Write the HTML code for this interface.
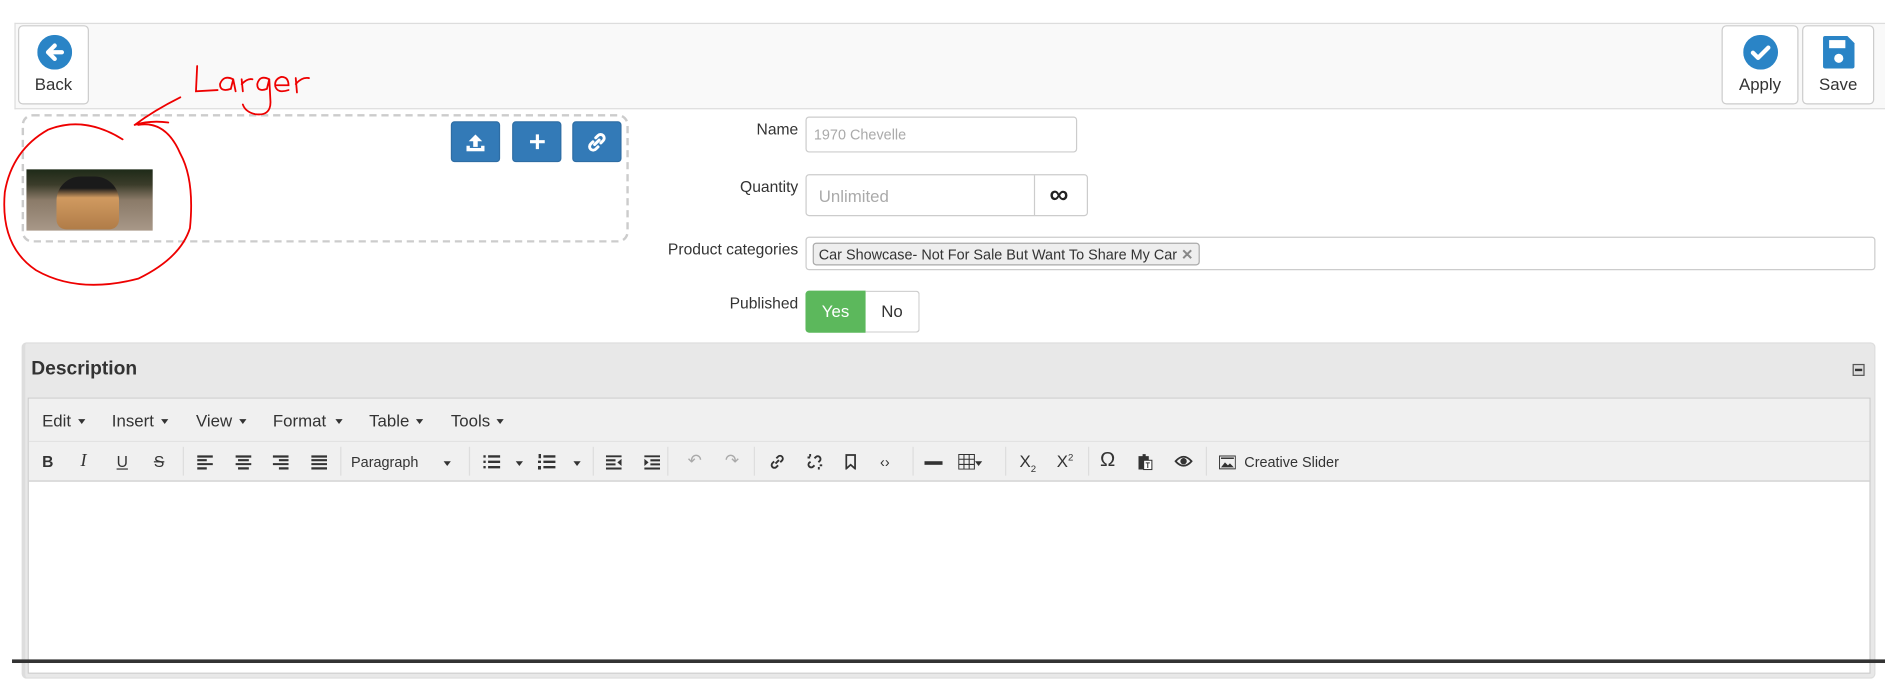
<!DOCTYPE html>
<html><head><meta charset="utf-8"><style>
*{box-sizing:border-box;margin:0;padding:0}
html,body{width:1885px;height:663px;overflow:hidden;background:#fff}
#w{position:absolute;left:0;top:0;width:1568px;height:552px;transform:scale(1.2022,1.2011);transform-origin:0 0;font-family:"Liberation Sans",sans-serif;color:#333}
.a{position:absolute}
.btn{position:absolute;top:21px;height:66px;background:#fff;border:1px solid #ccc;border-radius:4px;text-align:center;font-size:14px}
.btn span{position:absolute;left:0;right:0;top:40px}
.lbl{position:absolute;font-size:13px;text-align:right;right:904px}
.inp{position:absolute;border:1px solid #ccc;border-radius:3px;background:#fff}
.bb{position:absolute;top:101px;width:41px;height:34px;background:#337ab7;border-radius:3px;border:1px solid #2e6da4}
.mi{position:absolute;top:342px;font-size:14px;color:#333}
.ti{position:absolute;top:377px;font-size:13px;color:#333}
.sep{position:absolute;top:372px;width:1px;height:24px;background:#ddd}
.car{position:absolute;border-left:3.5px solid transparent;border-right:3.5px solid transparent;border-top:4px solid #333}
</style></head><body><div id="w">
<div class="a" style="left:12px;top:19px;width:1556px;height:72px;background:#f9f9f9;border:1px solid #ddd;border-right:0"></div>
<div class="btn" style="left:15px;width:59px">
<svg class="a" style="left:15px;top:7px" width="29" height="29" viewBox="0 0 34 34"><circle cx="17" cy="17" r="17" fill="#2a84c6"/><path d="M24 17H11M17 10.5l-6.5 6.5 6.5 6.5" stroke="#fff" stroke-width="4.2" fill="none" stroke-linecap="round" stroke-linejoin="round"/></svg>
<span>Back</span></div>
<div class="btn" style="left:1432px;width:64px">
<svg class="a" style="left:17px;top:7px" width="29" height="29" viewBox="0 0 34 34"><circle cx="17" cy="17" r="17" fill="#2a84c6"/><path d="M9.5 17.5l5 5 10-10" stroke="#fff" stroke-width="4.2" fill="none" stroke-linecap="round" stroke-linejoin="round"/></svg>
<span>Apply</span></div>
<div class="btn" style="left:1499px;width:60px">
<svg class="a" style="left:16px;top:8px" width="27" height="27" viewBox="0 0 31 32"><path d="M0 2Q0 0 2 0H24L31 7V30Q31 32 29 32H2Q0 32 0 30Z" fill="#2a84c6"/><rect x="6" y="4" width="16" height="8" fill="#fff"/><circle cx="15.5" cy="22" r="4.5" fill="#fff"/></svg>
<span>Save</span></div>

<div class="a" style="left:18px;top:95px;width:505px;height:107px;border:2px dashed #ccc;border-radius:9px"></div>
<div class="bb" style="left:375px"><svg class="a" style="left:12px;top:9px" width="15" height="15" viewBox="0 0 16 16"><path d="M8 1L2 7h4v5h4V7h4z M0 11h3v2h10v-2h3v5H0z" fill="#fff"/></svg></div>
<div class="bb" style="left:426px"><svg class="a" style="left:13px;top:9px" width="14" height="14" viewBox="0 0 16 16"><path d="M6.5 1h3v5.5H15v3H9.5V15h-3V9.5H1v-3h5.5z" fill="#fff"/></svg></div>
<div class="bb" style="left:476px"><svg class="a" style="left:11px;top:8px" width="17" height="17" viewBox="0 0 18 18"><path d="M8 5l2-2a3 3 0 0 1 4.5 4.5l-2 2M10 13l-2 2a3 3 0 0 1-4.5-4.5l2-2M7 11l4-4" stroke="#fff" stroke-width="2.6" fill="none" stroke-linecap="round"/></svg></div>
<div class="a" style="left:22px;top:141px;width:105px;height:51px;background:linear-gradient(#1e2a18 0%,#3b3c2a 25%,#8a7a68 50%,#a89888 100%);overflow:hidden"><div class="a" style="left:25px;top:6px;width:52px;height:44px;border-radius:20px 20px 8px 8px;background:linear-gradient(#1a1a1a 0,#1a1a1a 22%,#d09a60 40%,#b07c48 100%)"></div></div>

<div class="lbl" style="top:100px">Name</div>
<div class="inp" style="left:670px;top:97px;width:226px;height:30px"><span class="a" style="left:6px;top:7px;font-size:12px;color:#aaa">1970 Chevelle</span></div>
<div class="lbl" style="top:148px">Quantity</div>
<div class="inp" style="left:670px;top:145px;width:235px;height:35px"><span class="a" style="left:10px;top:9px;font-size:14px;color:#aaa">Unlimited</span><div class="a" style="left:189px;top:0;width:1px;height:33px;background:#ccc"></div><span class="a" style="left:202px;top:3px;font-size:22px;font-weight:bold;color:#222">∞</span></div>
<div class="lbl" style="top:200px">Product categories</div>
<div class="inp" style="left:670px;top:197px;width:890px;height:28px"><div class="a" style="left:5px;top:4px;height:19px;background:#eee;border:1px solid #aaa;border-radius:3px;font-size:12px;padding:2px 4px;white-space:nowrap">Car Showcase- Not For Sale But Want To Share My Car <span style="color:#888;font-weight:bold">✕</span></div></div>
<div class="lbl" style="top:245px">Published</div>
<div class="a" style="left:670px;top:242px;width:50px;height:35px;background:#5cb85c;border-radius:3px 0 0 3px;color:#fff;font-size:14px;text-align:center;line-height:35px">Yes</div>
<div class="a" style="left:720px;top:242px;width:45px;height:35px;border:1px solid #ccc;border-left:0;border-radius:0 3px 3px 0;font-size:14px;text-align:center;line-height:33px">No</div>

<div class="a" style="left:18px;top:285px;width:1542px;height:280px;background:#e8e8e8;border:1px solid #ddd;border-left:3px solid #ddd;border-radius:4px"></div>
<div class="a" style="left:26px;top:299px;font-size:16px;font-weight:bold;color:#333">Description</div>
<div class="a" style="left:1541px;top:303px;width:10px;height:10px;border:1px solid #555;background:#ddd"><div class="a" style="left:1px;top:3px;width:6px;height:2px;background:#333"></div></div>
<div class="a" style="left:23px;top:331px;width:1533px;height:230px;background:#fff;border:1px solid #ccc"></div>
<div class="a" style="left:24px;top:332px;width:1531px;height:69px;background:#f0f0f0;border-bottom:1px solid #ccc"></div>
<div class="a" style="left:24px;top:367px;width:1531px;height:1px;background:#e2e2e2"></div>
<div class="mi" style="left:35px">Edit</div><div class="car" style="left:65px;top:349px"></div>
<div class="mi" style="left:93px">Insert</div><div class="car" style="left:134px;top:349px"></div>
<div class="mi" style="left:163px">View</div><div class="car" style="left:199px;top:349px"></div>
<div class="mi" style="left:227px">Format</div><div class="car" style="left:279px;top:349px"></div>
<div class="mi" style="left:307px">Table</div><div class="car" style="left:346px;top:349px"></div>
<div class="mi" style="left:375px">Tools</div><div class="car" style="left:413px;top:349px"></div>

<div class="ti" style="left:35px;font-weight:bold">B</div>
<div class="ti" style="left:67px;font-style:italic;font-family:'Liberation Serif',serif;font-size:15px;top:376px">I</div>
<div class="ti" style="left:97px;text-decoration:underline">U</div>
<div class="ti" style="left:128px;text-decoration:line-through">S</div>
<div class="sep" style="left:152px"></div>
<svg class="a" style="left:164px;top:379px" width="120" height="12" viewBox="0 0 120 12" fill="#333"><path d="M0 0h13v2H0zM0 3.3h8v1.7H0zM0 6.6h13v1.7H0zM0 10h8v2H0z"/><path d="M32 0h13v2H32zM34 3.3h9v1.7h-9zM32 6.6h13v1.7H32zM34 10h9v2h-9z"/><path d="M63 0h13v2H63zM68 3.3h8v1.7h-8zM63 6.6h13v1.7H63zM68 10h8v2h-8z"/><path d="M95 0h13v2H95zM95 3.3h13v1.7H95zM95 6.6h13v1.7H95zM95 10h13v2H95z"/></svg>
<div class="sep" style="left:283px"></div>
<div class="ti" style="left:292px;font-size:12px;top:378px">Paragraph</div><div class="car" style="left:369px;top:384px"></div>
<div class="sep" style="left:390px"></div>
<svg class="a" style="left:402px;top:378px" width="70" height="13" viewBox="0 0 70 13" fill="#333"><path d="M0 1h2v2H0zM4 1h10v2H4zM0 5.5h2v2H0zM4 5.5h10v2H4zM0 10h2v2H0zM4 10h10v2H4z"/><path d="M50 1h10v2H50zM50 5.5h10v2H50zM50 10h10v2H50zM46 0h2v3.5h-2zM45.5 5.5h2.5v2h-2.5zM45.5 10h2.5v3h-2.5z"/></svg>
<div class="car" style="left:429px;top:384px"></div><div class="car" style="left:477px;top:384px"></div>
<div class="sep" style="left:493px"></div>
<svg class="a" style="left:504px;top:379px" width="50" height="12" viewBox="0 0 50 12" fill="#333"><path d="M0 0h13v1.7H0zM0 3.4h8v1.7H0zM0 6.8h8v1.7H0zM0 10.2h13V12H0zM13 3v6l-3.5-3z"/><path d="M32 0h13v1.7H32zM37 3.4h8v1.7h-8zM37 6.8h8v1.7h-8zM32 10.2h13V12H32zM32 3v6l3.5-3z"/></svg>
<div class="sep" style="left:555px"></div>
<div class="ti" style="left:572px;color:#aaa;font-size:14px;top:375px">↶</div><div class="ti" style="left:603px;color:#aaa;font-size:14px;top:375px">↷</div>
<div class="sep" style="left:627px"></div>
<svg class="a" style="left:640px;top:378px" width="13" height="13" viewBox="0 0 18 18"><path d="M8 5l2-2a3 3 0 0 1 4.5 4.5l-2 2M10 13l-2 2a3 3 0 0 1-4.5-4.5l2-2M7 11l4-4" stroke="#333" stroke-width="2.2" fill="none"/></svg>
<svg class="a" style="left:671px;top:378px" width="13" height="13" viewBox="0 0 18 18"><path d="M9 5l1.5-1.5a3 3 0 0 1 4.5 4.5l-1.5 1.5M9 13l-1.5 1.5a3 3 0 0 1-4.5-4.5L4.5 9M1 4h3M4 0v3M14 15v3M15 13h3" stroke="#333" stroke-width="2.2" fill="none"/></svg>
<svg class="a" style="left:703px;top:378px" width="10" height="13" viewBox="0 0 12 16"><path d="M1 1h9v14l-4.5-4-4.5 4z" stroke="#333" stroke-width="1.8" fill="none"/></svg>
<div class="ti" style="left:732px;font-size:12px;top:378px">‹›</div>
<div class="sep" style="left:759px"></div>
<div class="a" style="left:769px;top:384px;width:15px;height:2.5px;background:#333"></div>
<svg class="a" style="left:797px;top:378px" width="14" height="13" viewBox="0 0 16 15"><path d="M.5.5h15v14H.5zM.5 5h15M.5 10h15M5.5.5v14M10.5.5v14" stroke="#333" fill="none"/></svg><div class="car" style="left:811px;top:384px"></div>
<div class="sep" style="left:836px"></div>
<div class="ti" style="left:848px;font-size:14px;top:376px">X<sub style="font-size:8px">2</sub></div>
<div class="ti" style="left:879px;font-size:14px;top:376px">X<sup style="font-size:8px">2</sup></div>
<div class="sep" style="left:905px"></div>
<div class="ti" style="left:915px;font-size:17px;top:373px">Ω</div>
<svg class="a" style="left:947px;top:377px" width="12" height="15" viewBox="0 0 14 17"><path d="M0 3h10v13H0z" fill="#333"/><path d="M4 1h3v3H4z" fill="#333"/><rect x="5" y="7" width="8" height="9" fill="#fff" stroke="#333"/><path d="M7 9.5h4M9 9.5v5" stroke="#333"/></svg>
<svg class="a" style="left:977px;top:379px" width="15" height="10" viewBox="0 0 18 12"><path d="M1 6Q9-3 17 6Q9 15 1 6z" stroke="#333" stroke-width="1.8" fill="none"/><circle cx="9" cy="6" r="3.2" fill="#333"/></svg>
<div class="sep" style="left:1003px"></div>
<svg class="a" style="left:1014px;top:379px" width="14" height="12" viewBox="0 0 17 14"><rect x=".5" y=".5" width="16" height="13" fill="none" stroke="#333"/><path d="M2 12l4-5 3 3 2-2 4 4z" fill="#333"/><rect x="2" y="2" width="13" height="1.5" fill="#333"/></svg>
<div class="ti" style="left:1035px;font-size:12px;top:378px">Creative Slider</div>

<div class="a" style="left:10px;top:549px;width:1558px;height:3px;background:#333"></div>

<svg class="a" style="left:0;top:0" width="300" height="250" viewBox="0 0 300 250" fill="none" stroke="#e00" stroke-width="1.5" stroke-linecap="round">
<path d="M102 116Q70 96 40 108Q10 125 4 160Q0 205 30 225Q65 245 115 232Q150 215 158 190Q162 150 150 128Q138 100 115 104"/>
<path d="M112 104Q128 92 150 81M112 104Q125 100 140 102"/>
<path d="M164 55L163 76L181 75"/>
<path d="M194 66Q186 62 183 70Q183 77 192 74L194 66L196 76"/>
<path d="M201 66L202 76M201 70Q206 65 210 66"/>
<path d="M224 66Q216 62 214 70Q214 77 222 74L224 66L225 85Q225 97 212 95Q204 93 202 87"/>
<path d="M230 71H240Q240 64 234 64Q228 66 229 72Q231 78 240 75"/>
<path d="M246 65L247 77M246 70Q251 64 257 65"/>
</svg>
</div></body></html>
